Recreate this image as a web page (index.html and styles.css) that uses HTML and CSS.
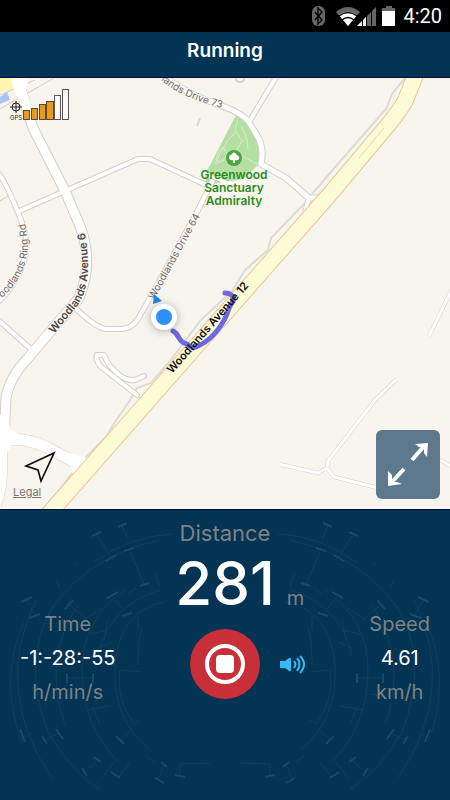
FILE: index.html
```html
<!DOCTYPE html>
<html lang="en">
<head>
    <meta charset="UTF-8">
    <meta name="viewport" content="width=device-width, initial-scale=1.0">
    <title>Running</title>
    <link rel="stylesheet" href="styles.css">
</head>
<body>

<div class="status-bar">
    <svg class="status-icons" width="94" height="22" viewBox="0 0 94 22" aria-hidden="true">
        <rect x="3" y="1" width="13" height="20" rx="6" fill="#666"/>
        <path d="M6 7l7 8-4 4V3l4 4-7 8" fill="none" stroke="#000" stroke-width="1.3"/>
        <path d="M27 7Q39 -3 51 7L39 21Z" fill="#666"/>
        <path d="M30 10Q39 3 48 10L39 21Z" fill="#fff"/>
        <path d="M30 11Q39 4 48 11M33 15Q39 10 45 15" fill="none" stroke="#000" stroke-width="1.3"/>
        <path d="M48 21L67 2V21Z" fill="#666"/>
        <path d="M48 21L57 12V21Z" fill="#fff"/>
        <path d="M53.500 12v9M57.500 8v13M62.500 4v17" stroke="#000" stroke-width="1"/>
        <path d="M73 6V3h4V1h6v2h3v3z" fill="#666"/>
        <rect x="73" y="6" width="13" height="15" fill="#fff"/>
    </svg>
    <span class="clock">4:20</span>
</div>

<header class="header">
    <h1 class="title">Running</h1>
</header>

<main class="map">
    <svg class="map-canvas" viewBox="0 78 450 431" preserveAspectRatio="xMidYMid slice" role="img" aria-label="Map">
        <defs>
            <path id="ave6" d="M20 70L21 90L33 128L65 191L80 226Q94 262 79 298L50 332L28 358Q9 378 6 398L4 440"/>
            <path id="ave6South" d="M3 415V470Q3 490 -3 505"/>
            <path id="ave6East" d="M0 441Q24 436 46 447L80 465"/>
            <path id="ringRoad" d="M-3 172Q4 178 17 210Q30 238 25 258Q18 284 -4 304"/>
            <path id="cross" d="M17 212L138 159L150 159L206 185"/>
            <path id="drive73" d="M160 72Q180 92 222 106Q242 113 249 122L259 139Q264 150 261 164L286 178L309 198H320"/>
            <path id="north" d="M249 122L278 74"/>
            <path id="drive64" d="M213 180L196 214L151 296L138 319Q131 329 122 329H106Q96 328 75 308"/>
            <path id="west" d="M-3 319L33 351"/>
            <path id="loop" d="M137 395L100 366Q95 358 97 355H104L109 365L118 374Q126 381 135 380L144 376"/>
            <path id="ave12" d="M419 66L406 99Q402 108 388 125L330 194L54 508L40 524"/>
            <path id="farm" d="M279 464L318 473L327 468L328 461L375 400L397 379M327 468L334 477L378 488Q382 470 394 468L438 459L455 468M429 336L455 283"/>

            <path id="nameAve6" d="M54 334L78 305Q96 278 82 220"/>
            <path id="nameRing" d="M2 298Q20 282 26 260Q31 242 22 212"/>
            <path id="name64" d="M154 300L204 209"/>
            <path id="name73" d="M161 80Q184 101 242 113"/>
            <path id="nameAve12" d="M172 374L257 277"/>
        </defs>

        <rect y="60" width="450" height="470" fill="#f8f4ee"/>

        <!-- town corner -->
        <path d="M0 78H32L22 88L0 92Z" fill="#fff5b0"/>
        <path d="M0 97L7 92L10 100L0 104Z" fill="#a9c3ee"/>
        <path d="M0 109L54 78M0 95L35 80M0 201L8 196" fill="none" stroke="#d2cfca" stroke-width="1"/>

        <!-- park -->
        <path d="M236 115L249 124L257 140Q261 150 258 165L244 179L205 185L207 171Z" fill="#b5dfa3"/>
        <path d="M208 175L232 185L249 178" fill="none" stroke="#fff" stroke-width="3"/>
        <path d="M238 120L235 130L242 141L236 151L246 158L257 164M236 132L228 140L221 152L215 164L224 160M241 126L247 139L248 150M218 153l5-6 4 7-5 8-6-2z" fill="none" stroke="#d4edc8" stroke-width="1"/>

        <!-- footpaths -->
        <g fill="none" stroke="#dedbd3" stroke-width="2">
            <path d="M405 78L392 94L386 109L350 150L312 194"/>
            <path d="M306 202L271 238L268 250L245 270L232 291L200 321L170 361L151 383L137 388L130 400L115 422L106 437L84 459"/>
            <path d="M72 473L60 489L42 510"/>
        </g>
        <path d="M200 118L197 126" stroke="#d8d5cf" stroke-width="2"/>
        <ellipse cx="240" cy="79" rx="4" ry="3" fill="none" stroke="#d8d5cf" stroke-width="2"/>

        <!-- road edges -->
        <g class="road road-edge">
            <use href="#ringRoad" stroke-width="6"/>
            <use href="#cross" stroke-width="6"/>
            <use href="#drive73" stroke-width="7"/>
            <use href="#north" stroke-width="6"/>
            <use href="#drive64" stroke-width="6"/>
            <use href="#west" stroke-width="6"/>
            <use href="#loop" stroke-width="6" stroke-linecap="round"/>
            <use href="#farm" stroke-width="4"/>
            <use href="#ave6" stroke-width="11"/>
            <use href="#ave6South" stroke-width="9"/>
            <use href="#ave6East" stroke-width="12"/>
            <path d="M309 198L305 212" stroke-width="6"/>
        </g>
        <!-- road fills -->
        <g class="road road-fill">
            <use href="#ringRoad" stroke-width="4"/>
            <use href="#cross" stroke-width="4"/>
            <use href="#drive73" stroke-width="5"/>
            <use href="#north" stroke-width="4"/>
            <use href="#drive64" stroke-width="4"/>
            <use href="#west" stroke-width="4"/>
            <use href="#loop" stroke-width="4" stroke-linecap="round"/>
            <use href="#farm" stroke-width="3"/>
            <use href="#ave6" stroke-width="9"/>
            <use href="#ave6South" stroke-width="8"/>
            <use href="#ave6East" stroke-width="11"/>
            <path d="M309 198L305 212" stroke-width="4"/>
        </g>
        <path d="M10 70H31L26 90L35 115L24 112L13 88Z" fill="#fff"/>
        <path d="M0 420H8L11 430L20 435L12 445L7 452H0Z" fill="#fff"/>
        <path d="M66 452L90 459L94 468L76 484L72 470Z" fill="#fff"/>

        <use href="#ave12" class="road" stroke="#e9c79a" stroke-width="17"/>
        <use href="#ave12" class="road" stroke="#fdfbd5" stroke-width="15"/>
        <path d="M384 128L359 158" stroke="#ecd6a4" stroke-width="1"/>

        <!-- recorded track -->
        <path d="M173 331Q177 333 179 338Q182 343 187 344L193 348Q206 344 216 332Q226 320 229 308L234 299Q232 293 225 293" class="track"/>

        <g class="street-minor">
            <text><textPath href="#nameRing">oodlands Ring Rd</textPath></text>
            <text><textPath href="#name64">Woodlands Drive 64</textPath></text>
            <text><textPath href="#name73">lands Drive 73</textPath></text>
        </g>
        <g class="street-major">
            <text><textPath href="#nameAve6">Woodlands Avenue 6</textPath></text>
            <text class="street-main"><textPath href="#nameAve12">Woodlands Avenue 12</textPath></text>
        </g>

        <circle cx="234" cy="158" r="8" fill="#4aa83c"/>
        <path d="M233 163V160Q229 161 229 157Q229 155 231 155Q234 150 237 155Q240 156 239 159Q237 161 235 160V163Z" fill="#fff"/>
        <g class="park-name">
            <text x="234" y="179">Greenwood</text>
            <text x="234" y="192">Sanctuary</text>
            <text x="234" y="205">Admiralty</text>
        </g>

        <!-- current position -->
        <path d="M154 294L162 301L153 304Z" fill="#1f84e4"/>
        <circle cx="164" cy="317" r="13" class="position-ring"/>
        <circle cx="164" cy="317" r="8" fill="#2e90fa"/>
    </svg>

    <svg class="gps" width="62" height="34" viewBox="0 0 62 34" role="img" aria-label="GPS signal">
        <circle cx="7" cy="19" r="4" fill="none" stroke="#222" stroke-width="1"/>
        <path d="M7 13V25M1 19H13" stroke="#222" stroke-width="1"/>
        <text x="1" y="32" class="gps-text">GPS</text>
        <g fill="#e79a1c" stroke="#5d4a2c" stroke-width="1">
            <rect x="14.500" y="22.500" width="6" height="9"/>
            <rect x="22.500" y="20.500" width="6" height="11"/>
            <rect x="30.500" y="16.500" width="6" height="15"/>
            <rect x="37.500" y="13.500" width="7" height="18"/>
        </g>
        <g fill="#fbf9f5" stroke="#5b5854" stroke-width="1">
            <rect x="45.500" y="7.500" width="6" height="24"/>
            <rect x="53.500" y="1.500" width="6" height="30"/>
        </g>
    </svg>

    <button class="locate" type="button" aria-label="My location">
        <svg width="32" height="32" viewBox="0 0 32 32">
            <path d="M30 2L2 15L14 19L17 30Z" fill="none" stroke="#111" stroke-width="1.7"/>
        </svg>
    </button>
    <a class="legal" href="#">Legal</a>

    <button class="expand" type="button" aria-label="Full screen">
        <svg width="64" height="69" viewBox="0 0 64 69">
            <path d="M36 30L49 15M28 39L15 53" stroke="#fff" stroke-width="4"/>
            <path d="M39 14L52 13L51 27L48 23V17H43ZM12 41L16 45V52H21L26 54L12 56Z" fill="#fff"/>
        </svg>
    </button>
</main>

<section class="panel">
    <svg class="dial" viewBox="0 0 450 290" aria-hidden="true">
        <g id="dialHalf">
            <path d="M172 24Q130 26 94 52M160 30Q80 48 45 110M36 90Q-8 180 52 268M24 112Q-2 170 22 232M54 95Q20 150 48 222Q70 260 100 280M78 95Q42 150 65 215M160 80Q110 95 98 145M165 92Q120 100 115 155Q112 210 150 240M120 160Q115 190 135 215M125 80Q82 110 82 160Q82 215 118 252M142 118Q138 130 138 155"/>
            <path d="M97 25L111 47M122 16L128 29M130 42L144 74M155 62L160 77M112 86L127 104M68 94L86 108M26 89L36 106M67 168H93M60 78L56 70M73 53L78 56M22 228L32 223M44 230L60 223M84 263L98 250M102 268L114 252M118 267L130 253M120 230L132 219M158 270L164 254M180 254L211 253M180 254V266M135 213L142 209M122 160L140 162M100 276L96 280M108 110L104 130M138 106V120M84 110L102 98M90 124L108 120M98 138L112 132M128 84L136 78M86 200L110 196M68 186L80 184M100 214L92 196M146 246L154 252"/>
            <path class="dial-cap" d="M92 26L101 22M106 51L116 45M118 17L127 13M124 41L134 38M140 76L149 73M107 88L118 82M122 106L132 103M65 99L73 90M21 92L32 87M29 108L40 104M67 163V173M93 163V173M20 219L25 232M42 226L47 234M56 219L63 229M82 258L87 266M94 247L101 252M116 226L124 234M155 268L164 273M161 252L167 257M111 262L120 268M175 265L185 267"/>
        </g>
        <use href="#dialHalf" transform="matrix(-1 0 0 1 450 0)"/>
    </svg>

    <h2 class="label distance-label">Distance</h2>
    <div class="distance">
        <span class="distance-value">281</span>
        <span class="distance-unit">m</span>
    </div>

    <div class="stats">
        <div class="stat">
            <div class="label">Time</div>
            <div class="value">-1:-28:-55</div>
            <div class="label">h/min/s</div>
        </div>
        <button class="stop" type="button" aria-label="Stop">
            <svg width="40" height="40" viewBox="0 0 40 40">
                <circle cx="20" cy="20" r="18" fill="none" stroke="#fff" stroke-width="4"/>
                <rect x="11" y="11" width="18" height="18" rx="4" fill="#fff"/>
            </svg>
        </button>
        <div class="right">
            <button class="sound" type="button" aria-label="Sound">
                <svg width="26" height="20" viewBox="0 0 26 20">
                    <path d="M0 7H5L9 4Q11 3 11 5V16Q11 18 9 17L5 14H0Z" fill="#37b9f3"/>
                    <path d="M14 7Q17 10 14 14M17 4Q22 10 17 17M20 2Q28 10 20 19" fill="none" stroke="#37b9f3" stroke-width="2"/>
                </svg>
            </button>
            <div class="stat">
                <div class="label">Speed</div>
                <div class="value">4.61</div>
                <div class="label">km/h</div>
            </div>
        </div>
    </div>
</section>

</body>
</html>
```
FILE: styles.css
```css
* {
    box-sizing: border-box;
}

body {
    display: flex;
    flex-direction: column;
    min-height: 100vh;
    margin: 0;
    background-color: #033453;
    color: white;
    font-family: Inter, "Liberation Sans", sans-serif;
}

button {
    padding: 0;
    border: none;
    background: none;
    cursor: pointer;
}

svg {
    display: block;
}

.status-bar {
    display: flex;
    align-items: center;
    justify-content: flex-end;
    height: 32px;
    padding: 0 8px;
    background-color: black;
}

.clock {
    font-family: Roboto, sans-serif;
    font-size: 20px;
    line-height: 30px;
}

.header {
    height: 46px;
    border-bottom: 1px solid #0a0a3c;
}

.title {
    margin: 0;
    text-align: center;
    font-size: 19px;
    font-weight: 600;
    line-height: 38px;
}

.map {
    position: relative;
    flex: 1;
    min-height: 300px;
    overflow: hidden;
    background-color: #f8f4ee;
}

.map-canvas {
    position: absolute;
    width: 100%;
    height: 100%;
}

.road {
    fill: none;
    stroke-linejoin: round;
}

.road-edge {
    stroke: #d3d0cb;
}

.road-fill {
    stroke: white;
}

.track {
    fill: none;
    stroke: #6f68de;
    stroke-width: 5px;
    stroke-linecap: round;
    stroke-linejoin: round;
}

.street-minor, .street-major {
    paint-order: stroke;
    stroke: #f8f4ee;
    stroke-width: 2px;
}

.street-minor {
    font-size: 10px;
    fill: #6d6d6d;
}

.street-major {
    font-size: 11px;
    font-weight: 600;
    fill: #484848;
}

.street-major .street-main {
    fill: #111;
    stroke: none;
}

.park-name {
    font-size: 12px;
    font-weight: 600;
    text-anchor: middle;
    fill: #2e8b20;
}

.position-ring {
    fill: white;
    filter: drop-shadow(0 1px 4px rgba(0, 0, 0, 0.3));
}

.gps {
    position: absolute;
    top: 10px;
    left: 9px;
}

.gps-text {
    font-size: 6px;
    fill: #222;
}

.locate {
    position: absolute;
    bottom: 26px;
    left: 24px;
}

.legal {
    position: absolute;
    bottom: 10px;
    left: 13px;
    color: #777;
    font-size: 11px;
    line-height: 14px;
}

.expand {
    position: absolute;
    right: 10px;
    bottom: 10px;
    border-radius: 6px;
    background-color: rgba(77, 108, 130, 0.9);
}

.panel {
    position: relative;
    height: 291px;
    padding: 6px 20px;
    overflow: hidden;
    border-top: 1px solid #02103a;
}

.dial {
    position: absolute;
    top: 0;
    left: 0;
    width: 100%;
    height: 100%;
    fill: none;
    stroke: #103f5d;
    stroke-width: 1px;
}

.dial-cap {
    stroke: #1b4865;
    stroke-width: 2px;
}

.label {
    margin: 0;
    color: #7c8285;
    font-size: 20px;
    font-weight: 400;
    line-height: 34px;
}

.distance-label {
    position: relative;
    text-align: center;
    font-size: 22px;
}

.distance {
    position: relative;
    display: grid;
    grid-template-columns: 1fr auto 1fr;
    align-items: baseline;
    gap: 12px;
    height: 57px;
}

.distance-value {
    grid-column: 2;
    font-size: 60px;
    font-weight: 500;
    line-height: 66px;
}

.distance-unit {
    color: #7c8285;
    font-size: 20px;
}

.stats {
    position: relative;
    display: grid;
    grid-template-columns: 1fr auto 1fr;
    align-items: start;
    gap: 20px;
}

.stat {
    text-align: center;
}

.stats > .stat {
    justify-self: start;
}

.value {
    font-size: 20px;
    line-height: 34px;
}

.stop {
    display: grid;
    place-items: center;
    width: 70px;
    height: 70px;
    margin-top: 22px;
    border-radius: 50%;
    background-color: #c92f38;
}

.right {
    display: flex;
    align-items: flex-start;
    justify-content: space-between;
}

.sound {
    height: 70px;
    margin-top: 22px;
}
```
